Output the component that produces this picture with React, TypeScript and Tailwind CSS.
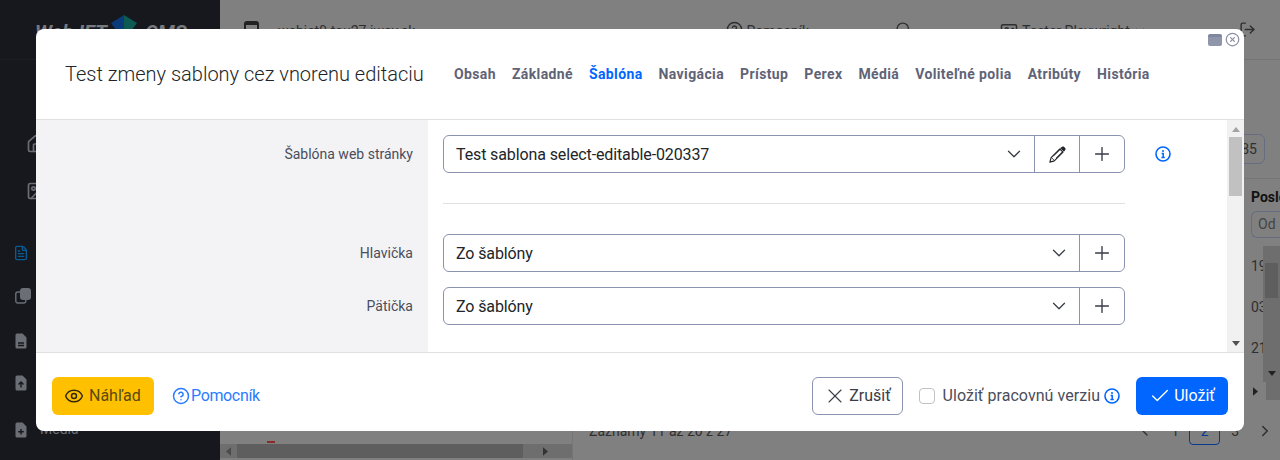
import React from 'react';
import { Check, ChevronDown, CircleHelp, CircleX, Eye, FileText, Home, Image, LogOut, Plus, Search, IdCard, X, ChevronLeft, ChevronRight } from 'lucide-react';

const tabs = ['Obsah', 'Základné', 'Šablóna', 'Navigácia', 'Prístup', 'Perex', 'Médiá', 'Voliteľné polia', 'Atribúty', 'História'];

const Arrow = ({ dir, className }: { dir: 'up' | 'down' | 'left' | 'right'; className: string }) => {
  const points = { up: '0,6 10,6 5,0', down: '0,0 10,0 5,6', left: '6,0 6,10 0,5', right: '0,0 0,10 6,5' }[dir];
  const box = dir === 'up' || dir === 'down' ? '0 0 10 6' : '0 0 6 10';
  return (
    <svg viewBox={box} className={className} fill="currentColor">
      <polygon points={points} />
    </svg>
  );
};

const InfoIcon = ({ size, className }: { size: number; className: string }) => (
  <svg width={size} height={size} viewBox="0 0 16 16" className={className} fill="none" stroke="currentColor">
    <circle cx="8" cy="8" r="7" strokeWidth="1.6" />
    <circle cx="8" cy="4.9" r="1" fill="currentColor" stroke="none" />
    <path d="M6.6 7.4H8.2V11.2M6.4 11.4H9.8" strokeWidth="1.5" />
  </svg>
);

const PencilIcon = () => (
  <svg width="17" height="17" viewBox="0 0 16 16" className="text-[#212529]" fill="none" stroke="currentColor">
    <path d="M10.6 1.9 L12.4 0.6 C13 0.2 13.6 0.3 14.1 0.8 L15.2 1.9 C15.7 2.4 15.8 3 15.4 3.6 L14.1 5.4 Z" fill="currentColor" stroke="none" />
    <path d="M10.2 2.8 L13.2 5.8 L5 14 L0.8 15.2 L2 11 Z" strokeWidth="1.1" strokeLinejoin="round" />
    <path d="M2.4 11 L5 13.6 M4.4 9.2 L11 2.8 M6.6 11.4 L13 5" strokeWidth="0.8" />
  </svg>
);

// filled sidebar file with a dark glyph cut into it
const SideFile = ({ glyph, className }: { glyph: string; className: string }) => (
  <svg width="12" height="16" viewBox="0 0 12 16" className={className}>
    <path d="M2 0.5H7.5L11.5 4.5V14A1.5 1.5 0 0 1 10 15.5H2A1.5 1.5 0 0 1 0.5 14V2A1.5 1.5 0 0 1 2 0.5Z" fill="currentColor" />
    <path d={glyph} stroke="#16181d" strokeWidth="1.4" fill="none" />
  </svg>
);

const SideCopy = ({ className }: { className: string }) => (
  <svg width="16" height="16" viewBox="0 0 16 16" className={className}>
    <rect x="0.8" y="4" width="10" height="11" rx="2" fill="none" stroke="currentColor" strokeWidth="1.4" />
    <rect x="5" y="0" width="11" height="12" rx="3" fill="currentColor" />
  </svg>
);

const SelectRow = ({ label, value, edit, className }: { label: string; value: string; edit?: boolean; className: string }) => (
  <div className={`flex ${className}`}>
    <div className="w-[392px] shrink-0 pr-[15px] pt-[9px] text-right text-[14px] leading-[20px] text-[#4a4e5c]">{label}</div>
    <div className="ml-[15px] flex h-[38px] w-[682px] items-stretch rounded-[6px] border border-[#8a93ad] text-[#212529]">
      <div className="flex flex-1 items-center justify-between pl-[12px] pr-[9px] text-[16px]">
        <span className="pt-[2px] tracking-[-0.12px]">{value}</span>
        <ChevronDown size={22} strokeWidth={1.4} className="text-[#3a3d48]" />
      </div>
      {edit && (
        <div className="flex w-[45px] items-center justify-center border-l border-[#8a93ad]">
          <PencilIcon />
        </div>
      )}
      <div className="flex w-[45px] items-center justify-center border-l border-[#8a93ad]">
        <Plus size={22} strokeWidth={1.5} className="text-[#3a3d48]" />
      </div>
    </div>
    {edit && (
      <div className="ml-[30px] flex items-center">
        <InfoIcon size={16} className="text-[#0066ff]" />
      </div>
    )}
  </div>
);

export default function App() {
  return (
    <div className="relative flex h-[460px] w-[1280px] overflow-hidden bg-[#808080] text-[#2f2f2f]" style={{ fontFamily: 'Roboto, sans-serif' }}>
      {/* Page behind the dialog */}
      <aside className="flex w-[220px] shrink-0 flex-col bg-[#16181d] text-[#6b6e75]">
        <div className="flex h-[60px] items-start border-b border-[#1d1f25] pl-[35px] pt-[20px] text-[20px] font-bold italic leading-[24px] text-[#77797e]">
          <span className="w-[76px]">WebJET</span>
          <svg width="26" height="26" viewBox="0 0 26 26" className="-mt-[5px]">
            <polygon points="13,0 26,8 13,26" fill="#0c5a52" />
            <polygon points="13,0 0,8 13,26" fill="#0a3a78" />
          </svg>
          <span className="ml-[8px]">CMS</span>
        </div>
        <div className="flex flex-col gap-[27px] pl-[26px] pt-[74px]">
          <Home size={20} />
          <Image size={20} />
        </div>
        <div className="flex flex-col pl-[15px] pt-[44px]">
          <FileText size={16} className="-ml-[2px] text-[#0a5a94]" />
          <SideCopy className="mt-[27px]" />
          <SideFile glyph="M3 10H9M3 12.5H9" className="mt-[29px]" />
          <SideFile glyph="M6 12.5V7M3.5 9.5L6 7L8.5 9.5" className="mt-[26px]" />
          <div className="mt-[28px] flex items-center gap-[13px] text-[14px]">
            <SideFile glyph="M6 7V12.5M3.2 9.8H8.8" className="" />
            <span>Média</span>
          </div>
        </div>
      </aside>

      <main className="flex min-w-0 flex-1 flex-col">
        <header className="flex h-[60px] shrink-0 items-start border-b border-[#747474] pt-[21px] text-[14px]">
          <div className="ml-[24px] h-[20px] w-[15px] rounded-[3px] border-2 border-t-[4px] border-[#222]" />
          <span className="ml-[19px]">webjet9.tau27.iway.sk</span>
          <CircleHelp size={17} className="ml-[311px]" />
          <span className="ml-[3px]">Pomocník</span>
          <Search size={17} className="ml-[86px]" />
          <IdCard size={18} className="ml-[88px]" />
          <span className="ml-[4px]">Tester Playwright</span>
          <ChevronDown size={14} className="ml-[3px] mt-[3px]" />
          <LogOut size={17} className="ml-[92px]" />
        </header>
        <div className="flex min-h-0 flex-1">
          <div className="flex w-[352px] shrink-0 flex-col justify-end">
            <div className="ml-[47px] h-[2px] w-[8px] bg-[#8c2a2a]" />
            <div className="mb-[2px] mt-[1px] flex h-[14px] items-center bg-[#6e6e6e] pl-[6px]">
              <Arrow dir="left" className="h-[9px] w-[5px] text-[#4a4a4a]" />
              <div className="ml-[6px] h-[14px] w-[286px] bg-[#5e5e5e]" />
              <Arrow dir="right" className="ml-[20px] h-[9px] w-[5px] text-[#333]" />
            </div>
          </div>
          <div className="flex min-w-0 flex-1 flex-col border-l border-[#757575]">
            <div className="flex h-[119px] shrink-0 justify-end border-b border-[#757575] pr-[15px] pt-[74px]">
              <div className="flex h-[30px] w-[60px] items-center justify-end rounded-[6px] border border-[#666d80] pr-[7px] text-[14px]">85</div>
            </div>
            <div className="overflow-hidden whitespace-nowrap pl-[678px] pt-[9px] text-[14px] font-bold leading-[18px] text-[#111]">Posledná</div>
            <div className="ml-[678px] mt-[5px] flex h-[27px] items-center rounded-l-[6px] border border-r-0 border-[#666d80] pl-[6px] text-[14px] text-[#444]">Od</div>
            <div className="ml-[678px] mt-[8px] flex h-[136px] shrink-0 text-[14px]">
              <div className="flex w-[12px] flex-col gap-[20px] overflow-hidden pt-[10px]">
                <span>19</span>
                <span>03</span>
                <span>21</span>
              </div>
              <div className="flex w-[17px] flex-col items-center bg-[#6e6e6e] pt-[17px]">
                <div className="h-[35px] w-[13px] bg-[#5e5e5e]" />
                <Arrow dir="down" className="mb-[6px] mt-auto h-[5px] w-[8px] text-[#222]" />
              </div>
            </div>
            <div className="ml-[678px] flex h-[18px] shrink-0 items-center pl-[2px]">
              <Arrow dir="right" className="h-[9px] w-[5px] text-[#222]" />
              <div className="ml-[8px] h-full flex-1 bg-[#6e6e6e]" />
            </div>
            <div className="mt-[17px] flex h-[28px] shrink-0 items-center whitespace-nowrap pl-[16px] pr-[6px] text-[14px]">
              <span>Záznamy 11 až 20 z 27</span>
              <ChevronLeft size={16} className="ml-auto" />
              <span className="ml-[18px]">1</span>
              <span className="ml-[10px] flex h-[28px] w-[31px] items-center justify-center rounded-[4px] border border-[#0a3a8c] text-[#0a3a8c]">2</span>
              <span className="ml-[11px]">3</span>
              <ChevronRight size={18} className="ml-[17px]" />
            </div>
          </div>
        </div>
      </main>

      {/* Dialog */}
      <div className="absolute left-[36px] top-[29px] flex h-[402px] w-[1208px] flex-col overflow-hidden rounded-[8px] bg-white">
        <div className="absolute right-[4px] top-[3px] flex items-center gap-[3px]">
          <div className="h-[12px] w-[14px] rounded-[2px] border-t-[3px] border-[#7f869e] bg-[#8f96ac]" />
          <CircleX size={15} strokeWidth={2} className="text-[#8a91a6]" />
        </div>
        <div className="flex h-[91px] shrink-0 items-center border-b border-[#e0e0e3] pl-[29px]">
          <h1 className="w-[389px] text-[20px] font-light text-[#212529]">Test zmeny sablony cez vnorenu editaciu</h1>
          <nav className="flex gap-[16px] text-[14px] font-bold tracking-[0.38px]">
            {tabs.map(t => (
              <span key={t} className={t === 'Šablóna' ? 'text-[#0066ff]' : 'text-[#5f6377]'}>{t}</span>
            ))}
          </nav>
        </div>
        <div className="relative flex h-[233px] shrink-0 border-b border-[#e0e0e3]">
          <div className="absolute bottom-0 left-0 top-0 w-[392px] bg-[#f3f3f5]" />
          <div className="relative flex min-w-0 flex-1 flex-col pt-[15px]">
            <SelectRow label="Šablóna web stránky" value="Test sablona select-editable-020337" edit className="" />
            <div className="ml-[407px] mt-[30px] h-px w-[682px] shrink-0 bg-[#e0e0e3]" />
            <SelectRow label="Hlavička" value="Zo šablóny" className="mt-[30px]" />
            <SelectRow label="Pätička" value="Zo šablóny" className="mt-[15px]" />
          </div>
          <div className="relative flex w-[17px] shrink-0 flex-col items-center bg-[#f1f1f1] pt-[7px]">
            <Arrow dir="up" className="h-[5px] w-[8px] text-[#a3a3a3]" />
            <div className="mt-[5px] h-[59px] w-[13px] bg-[#c1c1c1]" />
            <Arrow dir="down" className="mb-[6px] mt-auto h-[5px] w-[8px] text-[#505050]" />
          </div>
        </div>
        <div className="flex flex-1 items-start justify-between px-[16px] pt-[24px]">
          <div className="flex items-center">
            <button className="flex h-[38px] w-[102px] items-center gap-[5px] rounded-[6px] bg-[#ffc000] pl-[12px] text-[16px] text-[#5b4a10]">
              <Eye size={20} strokeWidth={1.8} className="text-[#33290a]" />
              Náhľad
            </button>
            <a className="ml-[18px] flex items-center gap-[1px] text-[16px] tracking-[-0.35px] text-[#2a7cff]">
              <CircleHelp size={18} strokeWidth={2} />
              Pomocník
            </a>
          </div>
          <div className="flex items-center">
            <button className="flex h-[38px] w-[91px] items-center justify-center gap-[2px] rounded-[6px] border border-[#8a93ad] text-[16px] text-[#3a3d48]">
              <X size={24} strokeWidth={1.1} />
              Zrušiť
            </button>
            <span className="ml-[16px] h-[16px] w-[16px] rounded-[4px] border border-[#bfc1c7]" />
            <span className="ml-[8px] text-[16px] tracking-[0.05px] text-[#4a4e5c]">Uložiť pracovnú verziu</span>
            <InfoIcon size={16} className="ml-[4px] text-[#0066ff]" />
            <button className="ml-[16px] flex h-[38px] w-[92px] items-center justify-center gap-[3px] rounded-[6px] bg-[#0066ff] text-[16px] text-white">
              <Check size={22} strokeWidth={1.5} />
              Uložiť
            </button>
          </div>
        </div>
      </div>
    </div>
  );
}
